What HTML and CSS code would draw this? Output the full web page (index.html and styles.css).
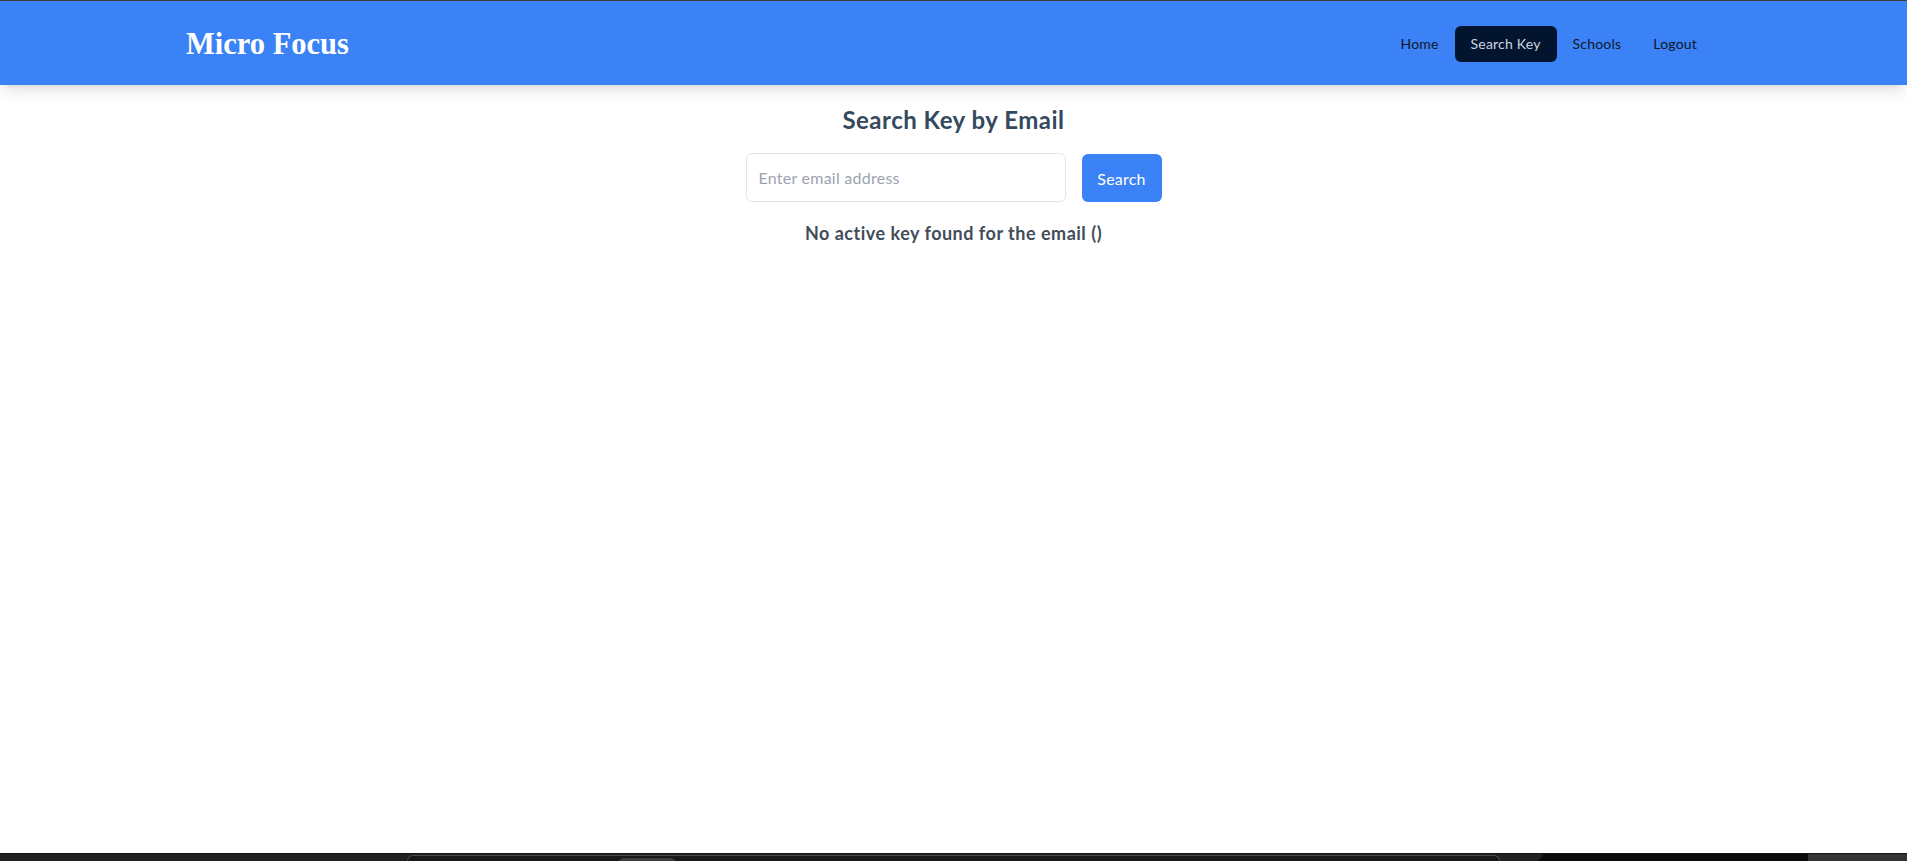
FILE: index.html
```html
<!DOCTYPE html>
<html lang="en">
<head>
<meta charset="utf-8">
<title>Search Key</title>
<link rel="stylesheet" href="styles.css">
</head>
<body>
<div class="topline"></div>
<header class="header">
  <div class="logo">Micro Focus</div>
  <nav class="nav">
    <a class="nav-link" href="#">Home</a>
    <a class="nav-link active" href="#">Search Key</a>
    <a class="nav-link" href="#">Schools</a>
    <a class="nav-link" href="#">Logout</a>
  </nav>
</header>
<main class="main">
  <h1 class="title">Search Key by Email</h1>
  <form class="search-form">
    <input class="email-input" type="email" placeholder="Enter email address">
    <button class="search-btn" type="button">Search</button>
  </form>
  <p class="message">No active key found for the email ()</p>
</main>
<footer class="taskbar">
  <div class="tb-left"></div>
  <div class="tb-mid"><div class="tb-tab"></div></div>
  <div class="tb-gap"></div>
  <div class="tb-black"></div>
  <div class="tb-right"></div>
</footer>
</body>
</html>
```
FILE: styles.css
```css
* { box-sizing: border-box; }
html, body { margin: 0; padding: 0; height: 100%; }
body {
  font-family: Lato, "Noto Sans", sans-serif;
  background: #ffffff;
  display: flex;
  flex-direction: column;
  min-height: 100vh;
  overflow: hidden;
}
.topline { height: 1px; background: #3d3d3d; flex: none; }
.header {
  height: 84px;
  flex: none;
  background: #3b82f6;
  display: flex;
  align-items: center;
  justify-content: space-between;
  padding: 0 194px 0 186px;
  box-shadow: 0 10px 15px -3px rgba(0,0,0,0.1), 0 4px 6px -4px rgba(0,0,0,0.1);
  position: relative;
  z-index: 1;
}
.logo {
  font-family: "Liberation Serif", serif;
  font-weight: bold;
  font-size: 30.5px;
  color: #ffffff;
  margin-top: 2px;
}
.nav { display: flex; align-items: center; margin-top: 1px; }
.nav-link {
  font-size: 14px;
  letter-spacing: 0.2px;
  color: #0f172a;
  text-decoration: none;
  padding: 0 16px;
  height: 36px;
  line-height: 36px;
  border-radius: 6px;
}
.nav-link.active { background: #03142f; color: #cbd5e1; }
.main {
  flex: 1;
  display: flex;
  flex-direction: column;
  align-items: center;
  padding-top: 19px;
}
.title {
  margin: 0;
  font-size: 24px;
  letter-spacing: 0.5px;
  line-height: 32px;
  font-weight: bold;
  color: #34495e;
}
.search-form {
  display: flex;
  gap: 16px;
  margin-top: 17px;
}
.email-input {
  width: 320px;
  height: 49px;
  border: 1px solid #e2e5ea;
  border-radius: 6px;
  padding: 0 12px;
  font-family: Lato, "Noto Sans", sans-serif;
  font-size: 16px;
  letter-spacing: 0.25px;
  color: #374151;
  outline: none;
}
.email-input::placeholder { color: #9ca3af; }
.search-btn {
  width: 80px;
  height: 48px;
  margin-top: 1px;
  border: none;
  border-radius: 6px;
  background: #3b82f6;
  color: #ffffff;
  font-family: Lato, "Noto Sans", sans-serif;
  font-size: 16px;
  letter-spacing: 0.2px;
}
.message {
  margin: 17px 0 0;
  font-size: 18px;
  letter-spacing: 0.5px;
  line-height: 28px;
  font-weight: bold;
  color: #434c5b;
}
.taskbar {
  height: 8px;
  flex: none;
  display: flex;
  background: #202020;
  border-top: 1px solid #141414;
}
.tb-left { width: 407px; }
.tb-mid {
  width: 1093px;
  background: #181818;
  border: 1px solid #4a4a4a;
  border-bottom: none;
  border-radius: 6px 6px 0 0;
  margin-top: 1px;
  padding-left: 210px;
}
.tb-tab {
  width: 58px;
  height: 6px;
  margin-top: 2px;
  background: #3e3e3e;
  border-radius: 8px 8px 0 0;
}
.tb-gap { width: 38px; }
.tb-black {
  width: 270px;
  background: #0a0a0a;
  clip-path: polygon(6px 0, 100% 0, 100% 100%, 0 100%);
}
.tb-right { flex: 1; background: #333333; }
```
